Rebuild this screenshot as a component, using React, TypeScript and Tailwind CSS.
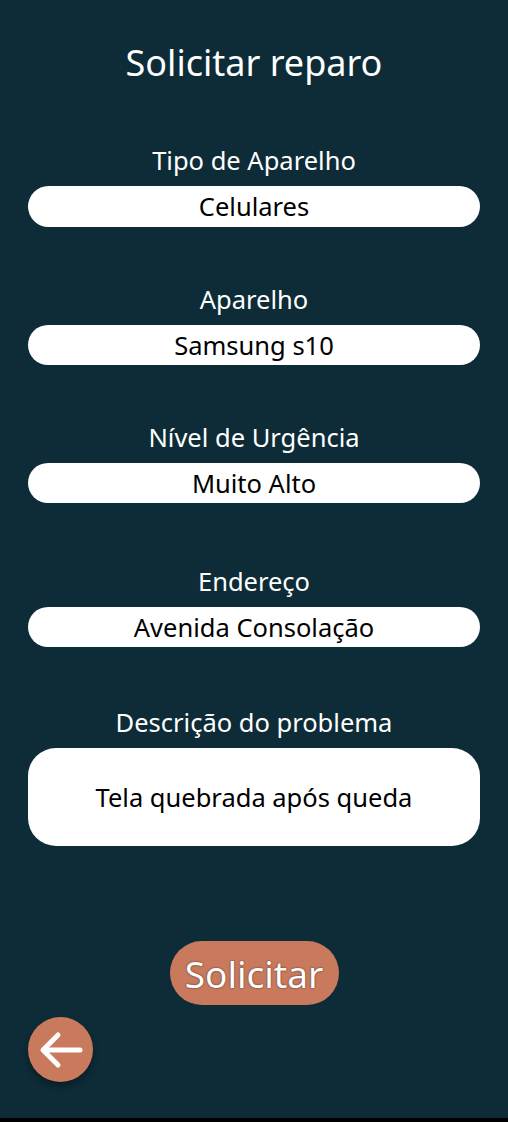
import React from "react";

const FONT = { fontFamily: '"Noto Sans", "Open Sans", sans-serif' };

type Campo = { label: string; valor: string; mt: string; h: string };

const campos: Campo[] = [
  { label: "Tipo de Aparelho", valor: "Celulares", mt: "mt-[61px]", h: "h-[41px]" },
  { label: "Aparelho", valor: "Samsung s10", mt: "mt-[58px]", h: "h-[40px]" },
  { label: "Nível de Urgência", valor: "Muito Alto", mt: "mt-[58px]", h: "h-[40px]" },
  { label: "Endereço", valor: "Avenida Consolação", mt: "mt-[64px]", h: "h-[40px]" },
];

const App: React.FC = () => {
  return (
    <div className="h-[1122px] flex flex-col bg-black" style={FONT}>
      <div className="flex-1 bg-[#0d2c37] flex flex-col px-7 pt-[41px]">
        <h1 className="text-center text-white text-[36px] leading-[44px]">
          Solicitar reparo
        </h1>

        {campos.map((c) => (
          <div key={c.label} className={`flex flex-col ${c.mt}`}>
            <label className="text-center text-white text-[25.5px] leading-[29px]">
              {c.label}
            </label>
            <div className={`mt-[11px] ${c.h} bg-white rounded-full flex items-center justify-center text-black text-[25.5px]`}>
              {c.valor}
            </div>
          </div>
        ))}

        <div className="flex flex-col mt-[61px]">
          <label className="text-center text-white text-[25.5px] leading-[29px]">
            Descrição do problema
          </label>
          <div className="mt-[11px] h-[98px] bg-white rounded-[28px] flex items-center justify-center text-black text-[25.5px]">
            Tela quebrada após queda
          </div>
        </div>

        <div className="flex justify-center mt-[95px]">
          <button className="w-[169px] h-[64px] rounded-full bg-[#c97a5d] text-white text-[37px] leading-none [text-shadow:0_0_2px_#3a2a24]">
            Solicitar
          </button>
        </div>

        <div className="mt-[12px]">
          <button className="w-[65px] h-[65px] rounded-full bg-[#c97a5d] flex items-center justify-center shadow-[0_4px_6px_rgba(0,0,0,0.35)]">
            <svg width="48" height="40" viewBox="0 0 48 40" fill="none">
              <path
                d="M43 20H7M21 5L6 20L21 35"
                stroke="white"
                strokeWidth="5"
                strokeLinecap="round"
                strokeLinejoin="round"
              />
            </svg>
          </button>
        </div>
      </div>
      <div className="h-1 bg-black" />
    </div>
  );
};

export default App;
